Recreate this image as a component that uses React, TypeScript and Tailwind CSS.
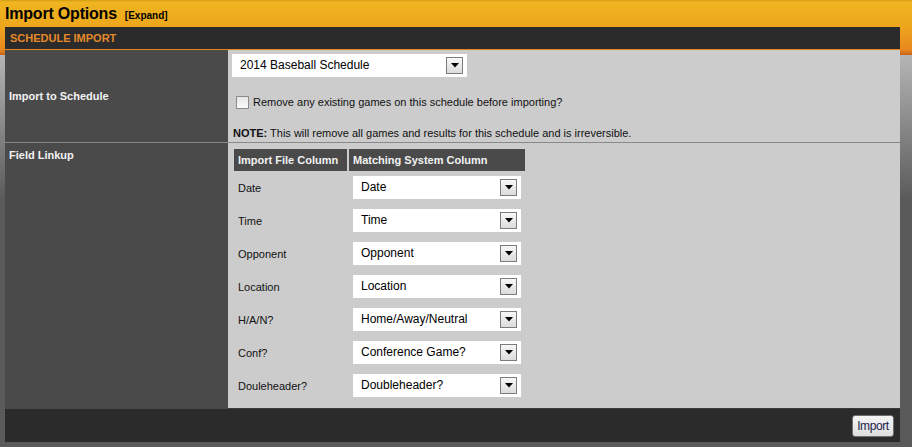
import React from "react";

const FIELDS: [string, string][] = [
  ["Date", "Date"],
  ["Time", "Time"],
  ["Opponent", "Opponent"],
  ["Location", "Location"],
  ["H/A/N?", "Home/Away/Neutral"],
  ["Conf?", "Conference Game?"],
  ["Douleheader?", "Doubleheader?"],
];

function DropArrow() {
  return (
    <span className="flex h-[17px] w-[17px] items-center justify-center border border-[#7c7c7c] bg-[linear-gradient(to_bottom,#f7f7f7,#dcdcdc)]">
      <svg width="8" height="5" viewBox="0 0 8 5">
        <path d="M0 0h8L4 4.5z" fill="#000" />
      </svg>
    </span>
  );
}

function FakeSelect({ value, width }: { value: string; width: string }) {
  return (
    <div
      className={`flex h-[23px] ${width} items-center justify-between bg-white pl-[8px] pr-[4px]`}
    >
      <span className="-mt-[2px] text-[12px] text-black">{value}</span>
      <DropArrow />
    </div>
  );
}

export default function App() {
  return (
    <div
      className="h-[447px] w-[912px] overflow-hidden bg-[linear-gradient(to_bottom,#d39a14_0px,#efb51f_2px,#eda61d_26px,#e8871e_50px,#c4621a_55px,#b5b5b5_55px,#5a5a5a_200px)] text-[#111]"
      style={{ fontFamily: '"Liberation Sans", Arial, sans-serif' }}
    >
      <div className="flex h-[27px] items-center gap-[8px] pl-[5px]">
        <h1 className="text-[16px] font-bold tracking-[-0.2px] text-black">
          Import Options
        </h1>
        <span className="mt-[3px] text-[10px] font-bold text-black">
          [Expand]
        </span>
      </div>

      <div className="ml-[5px] w-[895px]">
        <div className="flex h-[23px] items-center border-b border-[#e8861e] bg-[#2b2b2b] pl-[5px] text-[11px] font-bold uppercase text-[#e5892a]">
          Schedule Import
        </div>

        <div className="flex border-b border-[#888]">
          <div className="flex w-[223px] items-center bg-[#4a4a4a] pl-[4px] text-[11px] font-bold text-[#f2f2f2]">
            Import to Schedule
          </div>
          <div className="flex h-[92px] flex-1 flex-col bg-[#cccccc] pl-[4px] pt-[4px] text-[11px]">
            <FakeSelect value="2014 Baseball Schedule" width="w-[235px]" />
            <label className="mt-[17px] flex items-center gap-[4px] pl-[4px]">
              <span className="h-[13px] w-[13px] border border-[#8c8c8c] bg-[linear-gradient(to_bottom,#e6e6e6,#fafafa)]" />
              <span>Remove any existing games on this schedule before importing?</span>
            </label>
            <p className="mt-[14px] pl-[1px]">
              <b>NOTE:</b> This will remove all games and results for this
              schedule and is irreversible.
            </p>
          </div>
        </div>

        <div className="flex">
          <div className="w-[223px] bg-[#4a4a4a] pl-[4px] pt-[4px] text-[11px] font-bold text-[#f2f2f2]">
            Field Linkup
          </div>
          <div className="h-[266px] flex-1 border-b border-[#3a3a3a] bg-[#cccccc] pl-[6px] pt-[6px] text-[11px]">
            <div className="flex gap-[2px]">
              <div className="flex h-[22px] w-[113px] items-center bg-[#4a4a4a] pl-[4px] font-bold text-[#f2f2f2]">
                Import File Column
              </div>
              <div className="flex h-[22px] w-[176px] items-center bg-[#4a4a4a] pl-[4px] font-bold text-[#f2f2f2]">
                Matching System Column
              </div>
            </div>
            <div className="mt-[5px] flex flex-col gap-[10px]">
              {FIELDS.map(([label, value]) => (
                <div key={label} className="flex items-center">
                  <span className="w-[119px] pl-[4px] pt-[1px]">{label}</span>
                  <FakeSelect value={value} width="w-[168px]" />
                </div>
              ))}
            </div>
          </div>
        </div>

        <div className="flex h-[33px] items-center justify-end bg-[#2b2b2b] pr-[6px]">
          <button
            type="button"
            className="h-[22px] w-[42px] rounded-[3px] border border-[#707070] bg-[linear-gradient(to_bottom,#f4f4f4,#dedede)] text-[12px] tracking-[-0.4px] text-[#1c1c4c]"
          >
            Import
          </button>
        </div>
      </div>
    </div>
  );
}
